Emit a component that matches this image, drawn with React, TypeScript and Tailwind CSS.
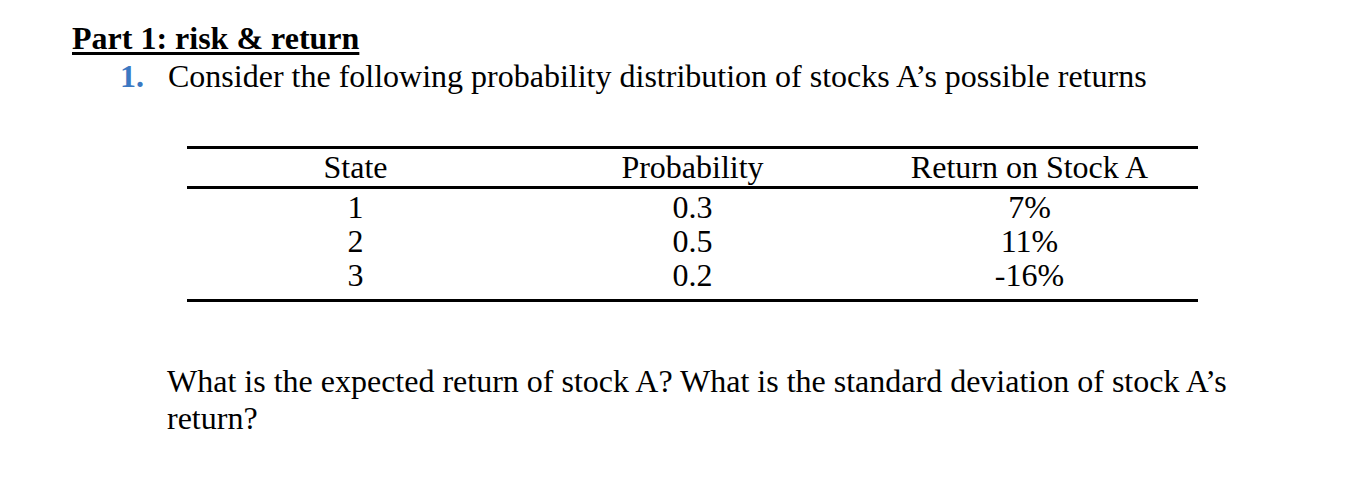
const rows = [
  { state: "1", prob: "0.3", ret: "7%" },
  { state: "2", prob: "0.5", ret: "11%" },
  { state: "3", prob: "0.2", ret: "-16%" },
];

export default function App() {
  return (
    <div className="h-[502px] w-[1368px] bg-white font-['Liberation_Serif',serif] text-black">
      <div className="pl-[72px] pt-[21px]">
        <h1 className="text-[32px] leading-[34px] font-bold underline decoration-[3px] underline-offset-[3px]">
          Part 1: risk &amp; return
        </h1>
        <div className="mt-[4px] flex text-[32px] leading-[34px]">
          <span className="w-[96px] pl-[48px] font-bold text-[#3b78c2]">1.</span>
          <span>Consider the following probability distribution of stocks A’s possible returns</span>
        </div>
      </div>

      <div className="ml-[187px] mt-[53px] w-[1011px]">
        <table className="w-full border-collapse text-[32px] leading-[34px]">
          <thead>
            <tr className="border-y-[3px] border-black">
              <th className="w-1/3 pt-[1px] pb-[2px] text-center font-normal">State</th>
              <th className="w-1/3 pt-[1px] pb-[2px] text-center font-normal">Probability</th>
              <th className="w-1/3 pt-[1px] pb-[2px] text-center font-normal">Return on Stock A</th>
            </tr>
          </thead>
          <tbody className="border-b-[3px] border-black">
            {rows.map((r, i) => (
              <tr key={r.state}>
                <td className={`text-center ${i === 0 ? "pt-[1px]" : ""} ${i === 2 ? "pb-[7px]" : ""}`}>{r.state}</td>
                <td className={`text-center ${i === 0 ? "pt-[1px]" : ""} ${i === 2 ? "pb-[7px]" : ""}`}>{r.prob}</td>
                <td className={`text-center ${i === 0 ? "pt-[1px]" : ""} ${i === 2 ? "pb-[7px]" : ""}`}>{r.ret}</td>
              </tr>
            ))}
          </tbody>
        </table>
      </div>

      <p className="ml-[167px] mt-[61px] w-[1150px] text-[32px] leading-[37px]">
        What is the expected return of stock A? What is the standard deviation of stock A’s
        <br />
        return?
      </p>
    </div>
  );
}
